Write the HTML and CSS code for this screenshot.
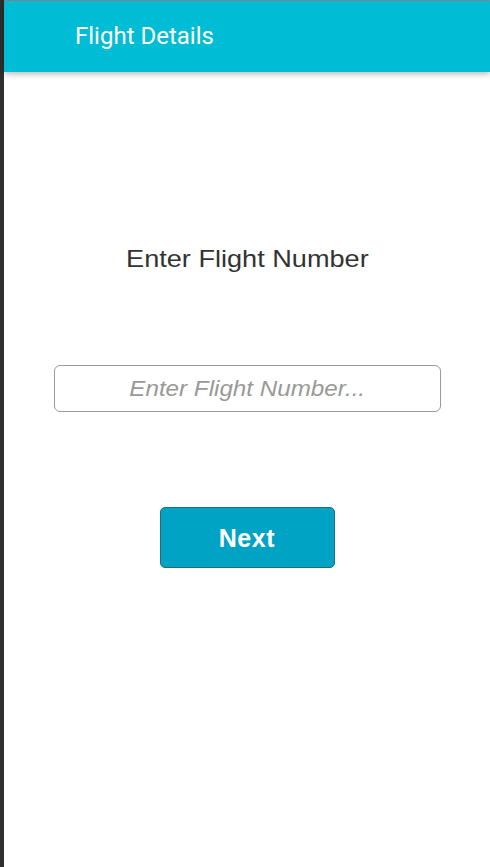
FILE: index.html
```html
<!DOCTYPE html>
<html>
<head>
<meta charset="utf-8">
<link rel="stylesheet" href="styles.css">
</head>
<body>
<div class="frame">
  <div class="edge"></div>
  <div class="screen">
    <header class="appbar"><span class="title">Flight Details</span></header>
    <main class="content">
      <div class="label">Enter Flight Number</div>
      <div class="field"><span class="placeholder">Enter Flight Number...</span></div>
      <button class="next">Next</button>
    </main>
  </div>
</div>
</body>
</html>
```
FILE: styles.css
```css
html, body { margin: 0; padding: 0; }
body { width: 490px; height: 867px; overflow: hidden; background: #fff; }
.frame { display: flex; height: 867px; }
.edge { width: 4px; background: #2e2e2e; flex: none; }
.screen { flex: 1; display: flex; flex-direction: column; border-top: 1px solid #8a8a8a; }
.appbar {
  height: 71px; background: #00bcd4; display: flex; align-items: center;
  padding-left: 71px; box-shadow: 0 2px 6px rgba(0,0,0,0.28); position: relative; z-index: 1;
}
.title { font-family: Roboto, "Noto Sans", sans-serif; color: #fff; font-size: 24px; margin-top: -2px; }
.content { display: flex; flex-direction: column; align-items: center; }
.label {
  margin-top: 173px; font-family: "Liberation Sans", Arial, sans-serif; font-size: 24px;
  color: #333; line-height: 28px; transform: scaleX(1.13);
}
.field {
  margin-top: 92px; width: 385px; height: 45px; border: 1px solid #9a9a9a; border-radius: 6px;
  display: flex; align-items: center; justify-content: center;
}
.placeholder {
  font-family: "Liberation Sans", Arial, sans-serif; font-style: italic; font-size: 22px; color: #999;
  display: inline-block; transform: scaleX(1.1); margin-top: 1px;
}
.next {
  margin-top: 95px; width: 175px; height: 61px; background: #00a3c4; border: 1px solid #1e6e80;
  border-radius: 5px; color: #fff; font-family: "Liberation Sans", Arial, sans-serif;
  font-weight: bold; font-size: 25px; letter-spacing: 0.6px; padding: 0; padding-top: 2px;
}
```
